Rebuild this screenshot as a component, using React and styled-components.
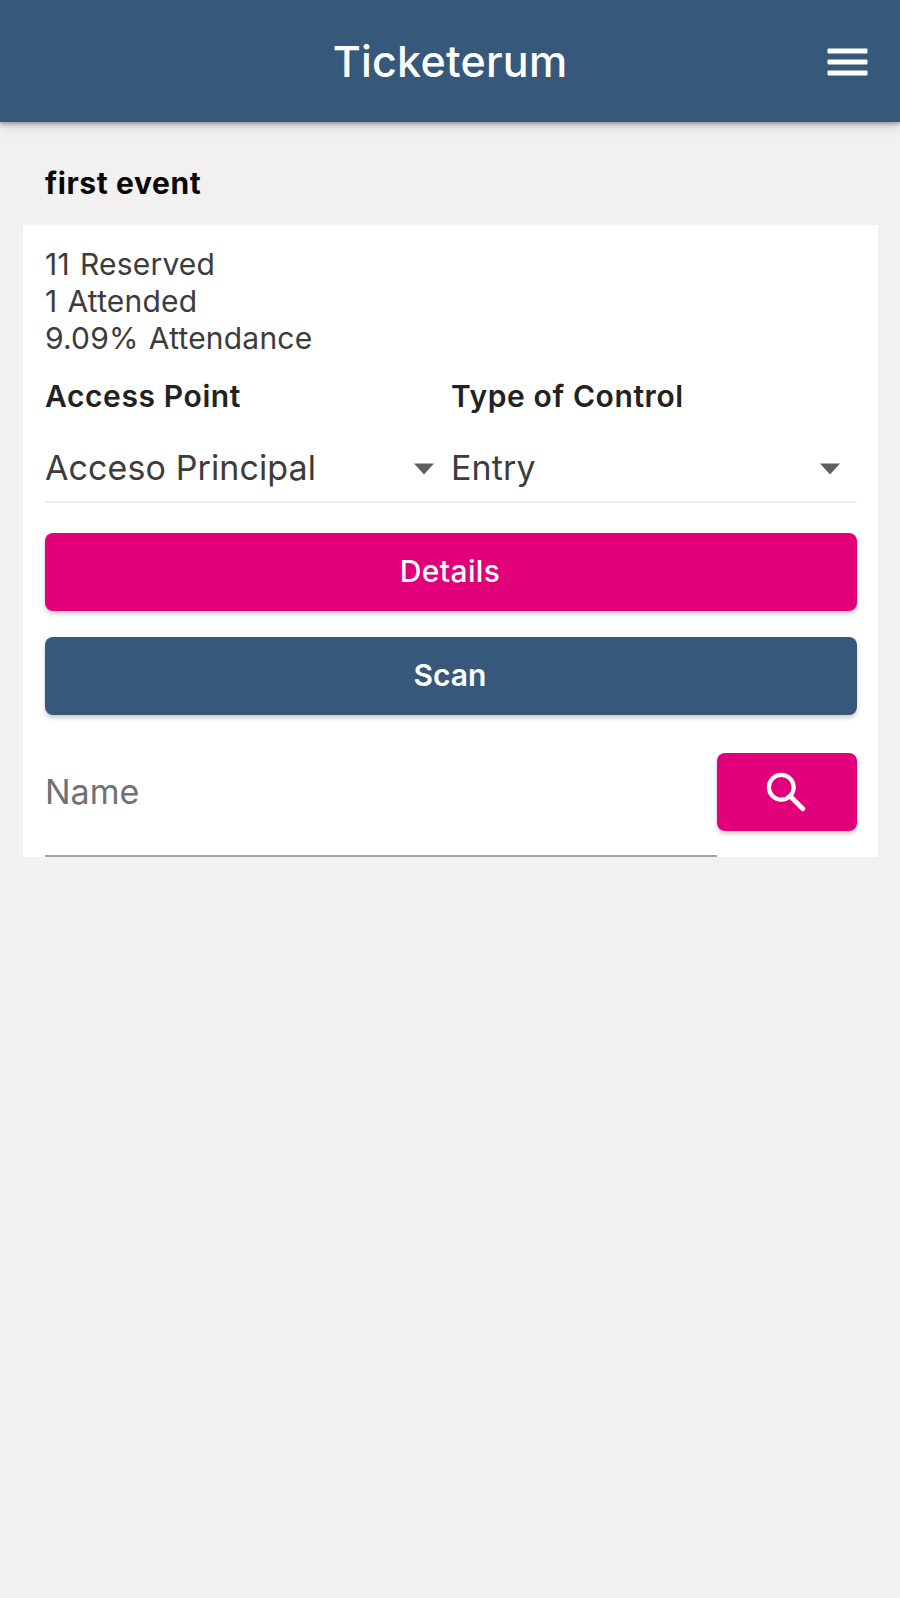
import React from 'react';
import styled, { createGlobalStyle } from 'styled-components';

const Global = createGlobalStyle`
  * { box-sizing: border-box; }
  body { margin: 0; background: #f2f1ef; font-family: Inter, "Liberation Sans", sans-serif; }
  button, input { font-family: inherit; }
`;

const Page = styled.div`
  min-height: 1598px;
  background: #f2f1ef;
`;

const Toolbar = styled.header`
  display: grid;
  grid-template-columns: 1fr auto 1fr;
  align-items: center;
  height: 122px;
  padding: 2px 32px 0;
  color: #fff;
  background: #36587a;
  box-shadow: 0 2px 4px rgba(0, 0, 0, 0.3), 0 5px 12px rgba(0, 0, 0, 0.13);
`;

const Title = styled.h1`
  grid-column: 2;
  margin: 0 0 3px;
  font-size: 43px;
  line-height: 50px;
  font-weight: 500;
  letter-spacing: 0.25px;
`;

const MenuButton = styled.button`
  justify-self: end;
  display: flex;
  padding: 0;
  border: 0;
  color: inherit;
  background: none;
`;

const EventName = styled.h2`
  margin: 0;
  padding: 42px 45px 23px;
  font-size: 30px;
  line-height: 38px;
  font-weight: 700;
  letter-spacing: 0.6px;
  color: #080808;
`;

const Card = styled.section`
  height: 632px;
  margin: 0 22px 0 23px;
  padding: 21px 21px 0 22px;
  background: #fff;
`;

const Stats = styled.div`
  color: #3c3c3c;
  font-size: 30px;
  line-height: 37px;
  letter-spacing: 0.2px;
  word-spacing: 1.5px;
`;

const Selects = styled.div`
  display: grid;
  grid-template-columns: 406px 1fr;
  height: 126px;
  margin-top: 20px;
  border-bottom: 2px solid #eee;
`;

const Label = styled.div`
  font-size: 30px;
  line-height: 38px;
  font-weight: 600;
  letter-spacing: 0.6px;
  color: #222;
`;

const Select = styled.div`
  display: flex;
  align-items: center;
  justify-content: space-between;
  height: 44px;
  margin-top: 30px;
  padding-right: 16px;
  font-size: 34px;
  letter-spacing: 0.1px;
  color: #3c3c3c;
`;

const Button = styled.button`
  display: flex;
  align-items: center;
  justify-content: center;
  width: ${(p) => p.$width || '100%'};
  height: 78px;
  padding: 0 2px ${(p) => (p.$width ? 0 : 2)}px 0;
  border: 0;
  border-radius: 8px;
  color: #fff;
  background: ${(p) => (p.$primary ? '#36587a' : '#e2007a')};
  box-shadow: 0 3px 4px rgba(0, 0, 0, 0.2);
  font-size: 30px;
  font-weight: ${(p) => (p.$primary ? 600 : 500)};
  letter-spacing: ${(p) => (p.$primary ? 0 : 0.4)}px;
`;

const Actions = styled.div`
  display: grid;
  gap: 26px;
  margin-top: 30px;
`;

const SearchRow = styled.div`
  display: flex;
  margin-top: 38px;
`;

const NameInput = styled.input`
  flex: 1;
  min-width: 0;
  height: 104px;
  padding: 0 0 25px;
  border: 0;
  border-bottom: 2px solid #a3a3a3;
  border-radius: 0;
  outline: 0;
  background: transparent;
  font-size: 34px;
  letter-spacing: 0;
  &::placeholder { color: #717171; opacity: 1; }
`;

const CaretIcon = styled.svg`
  margin-top: 3px;
`;

function Caret() {
  return (
    <CaretIcon width="22" height="12" viewBox="0 0 22 12">
      <path d="M1 0.5H21L11 11.5Z" fill="#606060" />
    </CaretIcon>
  );
}

export default function App() {
  return (
    <Page>
      <Global />
      <Toolbar>
        <Title>Ticketerum</Title>
        <MenuButton aria-label="Menu">
          <svg width="41" height="28" viewBox="0 0 41 28" fill="currentColor">
            <rect x="0.5" y="0.5" width="40" height="5" rx="1" />
            <rect x="0.5" y="11.5" width="40" height="5" rx="1" />
            <rect x="0.5" y="22.5" width="40" height="5" rx="1" />
          </svg>
        </MenuButton>
      </Toolbar>
      <EventName>first event</EventName>
      <Card>
        <Stats>
          <div>11 Reserved</div>
          <div>1 Attended</div>
          <div>9.09% Attendance</div>
        </Stats>
        <Selects>
          <div>
            <Label>Access Point</Label>
            <Select>Acceso Principal<Caret /></Select>
          </div>
          <div>
            <Label>Type of Control</Label>
            <Select>Entry<Caret /></Select>
          </div>
        </Selects>
        <Actions>
          <Button>Details</Button>
          <Button $primary>Scan</Button>
        </Actions>
        <SearchRow>
          <NameInput placeholder="Name" aria-label="Name" />
          <Button $width="140px" aria-label="Search">
            <svg width="40" height="40" viewBox="0 0 40 40" fill="none" stroke="currentColor">
              <circle cx="15.3" cy="15.3" r="12.4" strokeWidth="4.2" />
              <path d="M24 24L36.8 36.8" strokeWidth="4.8" strokeLinecap="round" />
            </svg>
          </Button>
        </SearchRow>
      </Card>
    </Page>
  );
}
